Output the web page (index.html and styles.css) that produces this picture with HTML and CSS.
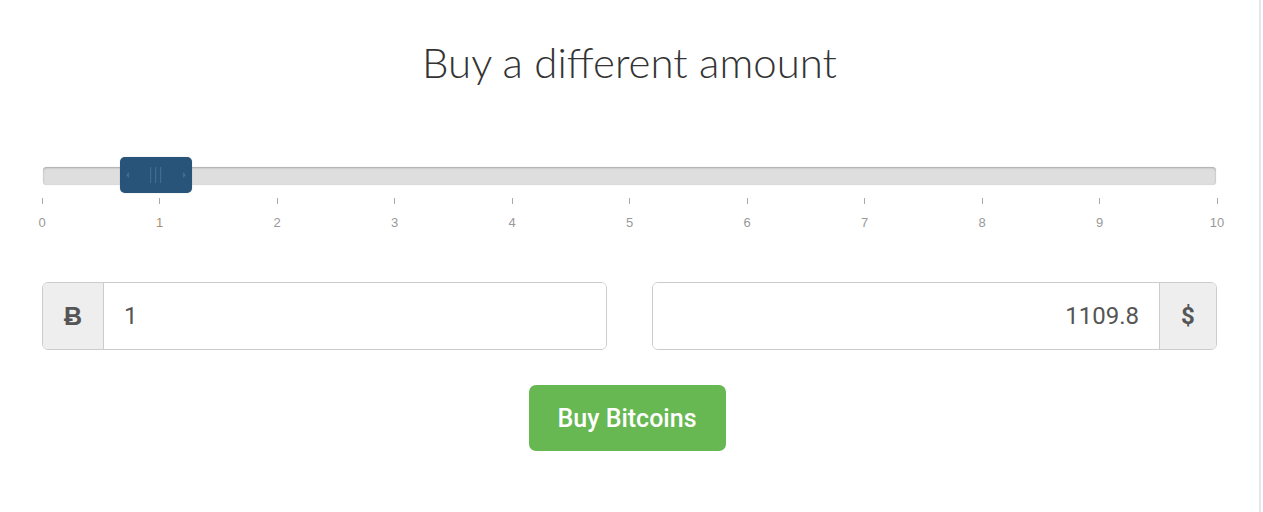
FILE: index.html
```html
<!DOCTYPE html>
<html lang="en">
<head>
    <meta charset="UTF-8">
    <meta name="viewport" content="width=device-width, initial-scale=1.0">
    <title>Buy a different amount</title>
    <link rel="stylesheet" href="styles.css">
</head>
<body>
    <div class="page">
        <h1>Buy a different amount</h1>

        <div class="slider">
            <div class="track">
                <div class="handle" style="left: 77px;">
                    <svg width="72" height="36" viewBox="0 0 72 36">
                        <path d="M9 15 L6 18 L9 21 Z" fill="#3f6c92"/>
                        <path d="M63 15 L66 18 L63 21 Z" fill="#3f6c92"/>
                        <rect x="30" y="10" width="1.2" height="16" fill="#3f6c92"/>
                        <rect x="35" y="10" width="1.2" height="16" fill="#3f6c92"/>
                        <rect x="40" y="10" width="1.2" height="16" fill="#3f6c92"/>
                    </svg>
                </div>
            </div>
            <div class="pips">
                <div class="pip"><span class="tick"></span><span class="label">0</span></div>
                <div class="pip active"><span class="tick"></span><span class="label">1</span></div>
                <div class="pip"><span class="tick"></span><span class="label">2</span></div>
                <div class="pip"><span class="tick"></span><span class="label">3</span></div>
                <div class="pip"><span class="tick"></span><span class="label">4</span></div>
                <div class="pip"><span class="tick"></span><span class="label">5</span></div>
                <div class="pip"><span class="tick"></span><span class="label">6</span></div>
                <div class="pip"><span class="tick"></span><span class="label">7</span></div>
                <div class="pip"><span class="tick"></span><span class="label">8</span></div>
                <div class="pip"><span class="tick"></span><span class="label">9</span></div>
                <div class="pip"><span class="tick"></span><span class="label">10</span></div>
            </div>
        </div>

        <div class="amounts">
            <div class="input-group">
                <span class="addon addon-btc">Ƀ</span>
                <input type="text" class="field" value="1">
            </div>
            <div class="input-group">
                <input type="text" class="field right" value="1109.8">
                <span class="addon addon-right">$</span>
            </div>
        </div>

        <div class="actions">
            <button class="buy-btn">Buy Bitcoins</button>
        </div>
    </div>
</body>
</html>
```

FILE: styles.css
```css
body {
    margin: 0;
    padding: 0;
    background-color: white;
    font-family: Roboto, "Liberation Sans", Arial, sans-serif;
    height: 512px;
    overflow: hidden;
}

.page {
    width: 1261px;
    height: 512px;
    border-right: 2px solid #e6e6e6;
    box-sizing: border-box;
    padding: 0 42px;
}

h1 {
    margin: 0;
    padding-top: 36px;
    text-align: center;
    font-family: Lato, "Open Sans", sans-serif;
    font-weight: 300;
    font-size: 42px;
    line-height: 52px;
    color: #333;
}

.slider {
    margin-top: 79px;
    padding: 0 1px;
}

.track {
    position: relative;
    height: 18px;
    margin-top: 10px;
    background-color: #dedede;
    border-radius: 4px;
    box-shadow: inset 0 1px 2px rgba(0, 0, 0, 0.25), 0 0 1px rgba(0, 0, 0, 0.2);
}

.handle {
    position: absolute;
    top: -10px;
    width: 72px;
    height: 36px;
    background-color: #295479;
    border-radius: 5px;
    box-shadow: 0 0 1px rgba(0, 0, 0, 0.4);
}

.handle svg {
    display: block;
}

.pips {
    display: flex;
    justify-content: space-between;
    margin: 13px -1px 0 -1px;
}

.pip {
    width: 0;
    display: flex;
    flex-direction: column;
    align-items: center;
}

.tick {
    width: 1px;
    height: 6px;
    background-color: #aaa;
}

.label {
    margin-top: 11px;
    font-family: "Liberation Sans", Arial, sans-serif;
    font-size: 13px;
    color: #999;
}

.pip.active .label {
    color: #a69072;
}

.amounts {
    display: flex;
    justify-content: space-between;
    margin-top: 52px;
}

.input-group {
    display: flex;
    width: 565px;
    height: 68px;
    border: 1px solid #ccc;
    border-radius: 6px;
    box-sizing: border-box;
    overflow: hidden;
}

.addon {
    width: 60px;
    flex: none;
    display: flex;
    align-items: center;
    justify-content: center;
    background-color: #eee;
    border-right: 1px solid #ccc;
    font-size: 24px;
    font-weight: 700;
    color: #555;
}

.addon-btc {
    font-size: 25px;
}

.addon-right {
    width: 56px;
    border-right: none;
    border-left: 1px solid #ccc;
}

.field {
    flex: 1;
    min-width: 0;
    border: none;
    outline: none;
    padding: 0 20px;
    font-family: Roboto, sans-serif;
    font-size: 24px;
    color: #555;
    background: white;
}

.field.right {
    text-align: right;
}

.actions {
    display: flex;
    justify-content: center;
    margin-top: 35px;
}

.buy-btn {
    width: 197px;
    height: 66px;
    margin-left: -5px;
    background-color: #67b852;
    color: white;
    border: none;
    border-radius: 7px;
    font-family: Roboto, sans-serif;
    font-weight: 500;
    font-size: 25px;
    cursor: pointer;
}
```
